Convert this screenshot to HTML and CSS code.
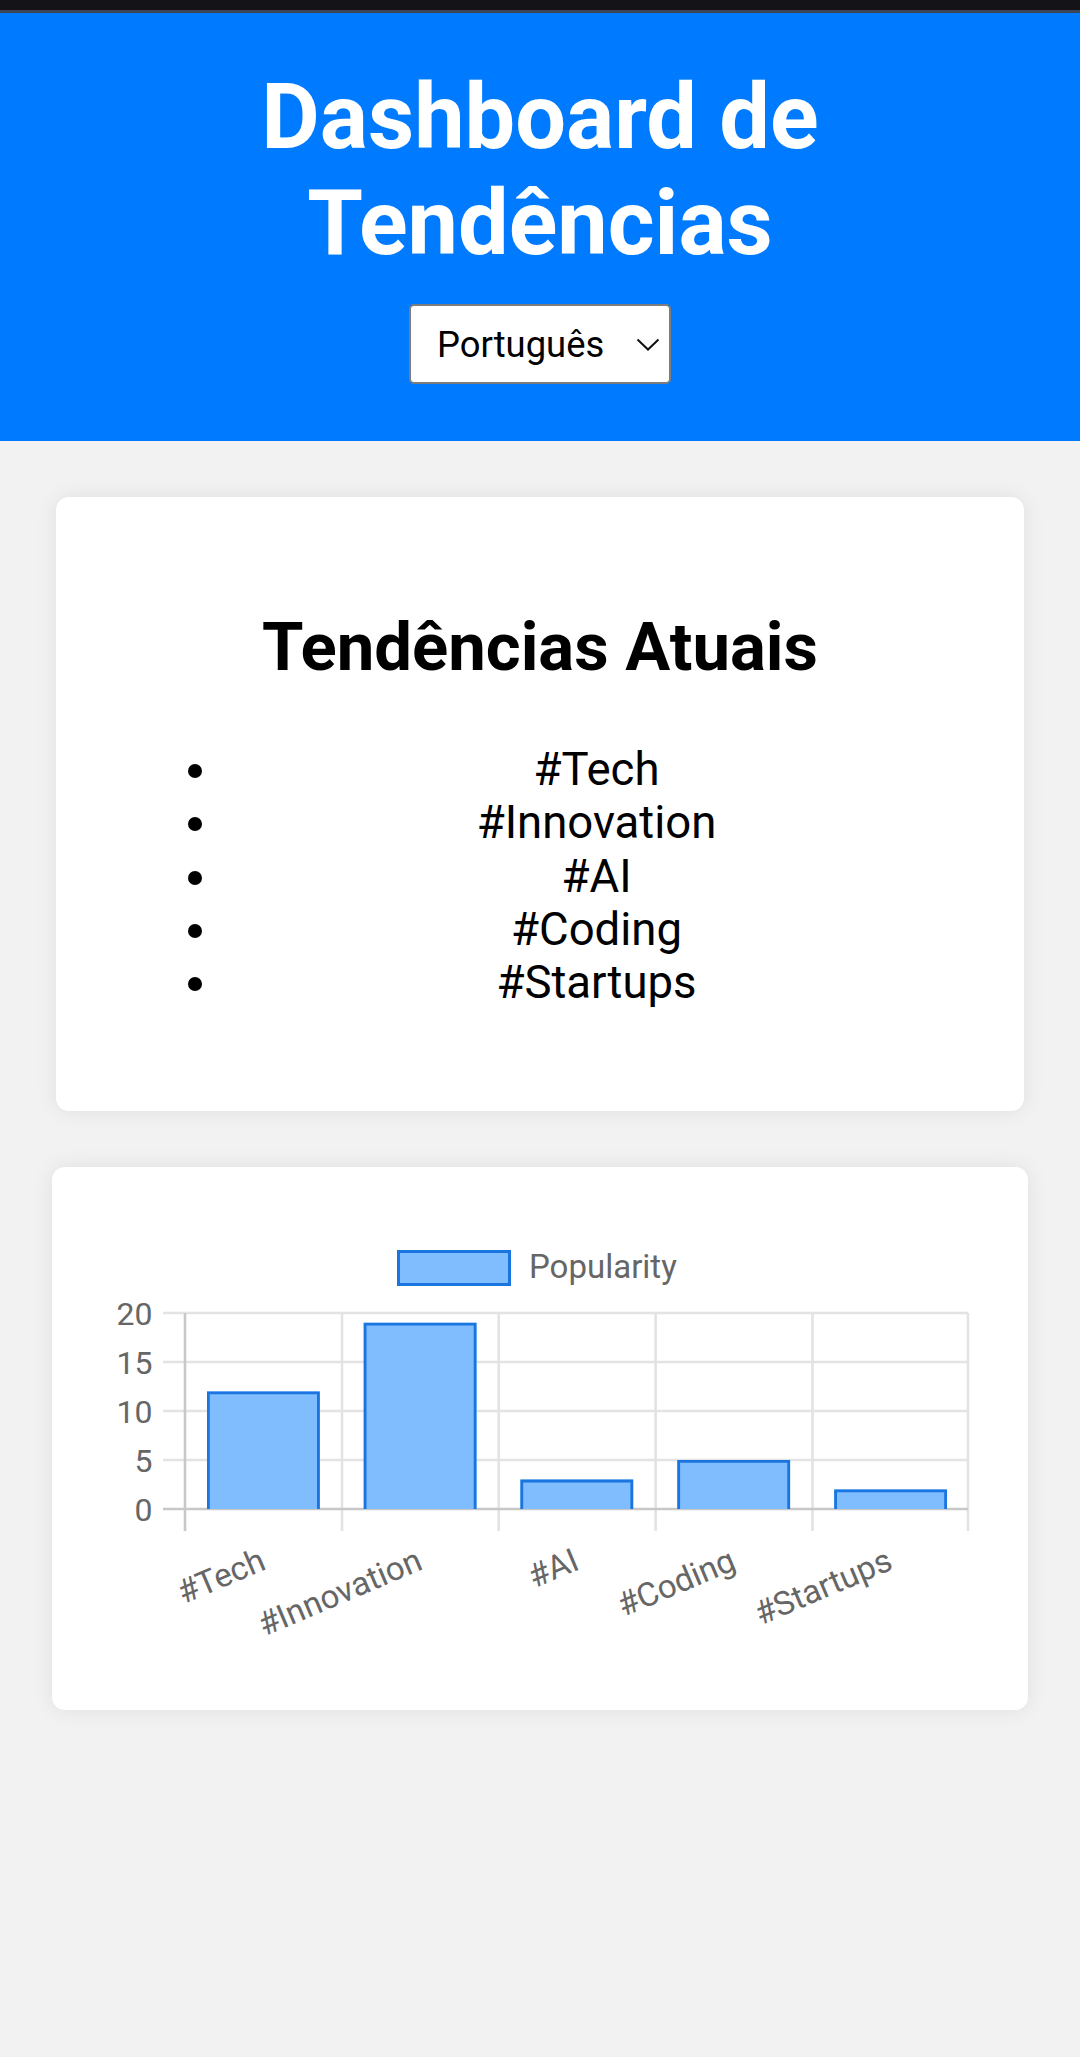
FILE: index.html
```html
<!DOCTYPE html>
<html lang="pt">
<head>
<meta charset="utf-8">
<title>Dashboard de Tendências</title>
<link rel="stylesheet" href="styles.css">
</head>
<body>
<div class="statusbar"></div>
<header class="header">
  <h1 class="title">Dashboard de Tendências</h1>
  <div class="select-wrap">
    <select class="lang">
      <option>Português</option>
      <option>English</option>
    </select>
    <svg class="chev" width="24" height="13" viewBox="0 0 24 13"><path d="M1.5 1.5 L12 11.5 L22.5 1.5" fill="none" stroke="#111" stroke-width="2"/></svg>
  </div>
</header>
<main class="main">
  <section class="card trends">
    <h2 class="card-title">Tendências Atuais</h2>
    <ul class="trend-list">
      <li>#Tech</li>
      <li>#Innovation</li>
      <li>#AI</li>
      <li>#Coding</li>
      <li>#Startups</li>
    </ul>
  </section>
  <section class="card chart-card">
    <svg class="chart" width="872" height="439" viewBox="0 0 872 439">
      <rect x="294.5" y="32.5" width="111" height="33" fill="#80bdff" stroke="#1a75e0" stroke-width="3"/>
      <text class="lbl big" x="425" y="58.5">Popularity</text>
      <g stroke="#e3e3e3" stroke-width="2.6">
        <line x1="59" y1="94" x2="864" y2="94"/>
        <line x1="59" y1="143" x2="864" y2="143"/>
        <line x1="59" y1="192" x2="864" y2="192"/>
        <line x1="59" y1="241" x2="864" y2="241"/>
        <line x1="238" y1="94" x2="238" y2="312"/>
        <line x1="394.7" y1="94" x2="394.7" y2="312"/>
        <line x1="551.6" y1="94" x2="551.6" y2="312"/>
        <line x1="708.5" y1="94" x2="708.5" y2="312"/>
        <line x1="864" y1="94" x2="864" y2="312"/>
      </g>
      <g stroke="#c8c8c8" stroke-width="2.6">
        <line x1="59" y1="290" x2="864" y2="290"/>
        <line x1="81" y1="94" x2="81" y2="312"/>
      </g>
      <g class="lbl" text-anchor="end">
        <text x="48.5" y="105.5">20</text>
        <text x="48.5" y="154.5">15</text>
        <text x="48.5" y="203.5">10</text>
        <text x="48.5" y="252.5">5</text>
        <text x="48.5" y="301.5">0</text>
      </g>
      <g fill="#80bdff">
        <rect x="103" y="172.4" width="112.8" height="117.6"/>
        <rect x="259.7" y="103.8" width="112.8" height="186.2"/>
        <rect x="416.4" y="260.6" width="112.8" height="29.4"/>
        <rect x="573.3" y="241" width="112.8" height="49"/>
        <rect x="730.2" y="270.4" width="112.8" height="19.6"/>
      </g>
      <g fill="none" stroke="#1a75e0" stroke-width="2.8">
        <path d="M104.4 290 V173.8 H214.4 V290"/>
        <path d="M261.1 290 V105.2 H371.1 V290"/>
        <path d="M417.8 290 V262 H527.8 V290"/>
        <path d="M574.7 290 V242.4 H684.7 V290"/>
        <path d="M731.6 290 V271.8 H841.6 V290"/>
      </g>
      <g class="lbl big" text-anchor="end">
        <text transform="translate(159 339) rotate(-23)" dy="0.35em">#Tech</text>
        <text transform="translate(315.7 339) rotate(-23)" dy="0.35em">#Innovation</text>
        <text transform="translate(472.4 339) rotate(-23)" dy="0.35em">#AI</text>
        <text transform="translate(629.1 339) rotate(-23)" dy="0.35em">#Coding</text>
        <text transform="translate(785.8 339) rotate(-23)" dy="0.35em">#Startups</text>
      </g>
    </svg>
  </section>
</main>
</body>
</html>
```
FILE: styles.css
```css
html, body {
  margin: 0;
  padding: 0;
}
body {
  background: #f2f2f2;
  font-family: Roboto, "Noto Sans", Arial, sans-serif;
  font-size: 45.5px;
  color: #000;
  min-height: 2057px;
}
.statusbar {
  height: 13px;
  background: linear-gradient(#141418 0, #141418 10px, #3b4553 10px, #3b4553 13px);
}
.header {
  background: #007bff;
  color: #fff;
  text-align: center;
  padding: 52px 0 57px;
}
.title {
  margin: 0 0 27px;
  font-size: 90px;
  font-weight: 700;
  line-height: 106px;
  padding: 0 150px;
}
.select-wrap {
  position: relative;
  display: inline-block;
  vertical-align: top;
}
.lang {
  -webkit-appearance: none;
  appearance: none;
  width: 262px;
  height: 80px;
  box-sizing: border-box;
  padding: 0 0 0 26px;
  font-family: Roboto, "Noto Sans", Arial, sans-serif;
  font-size: 36.4px;
  color: #000;
  background: #fff;
  border: 2px solid #7d7d7d;
  border-radius: 5px;
  display: block;
}
.chev {
  position: absolute;
  right: 11px;
  top: 34px;
  pointer-events: none;
}
.main {
  padding: 56px 0 0;
}
.card {
  background: #fff;
  border-radius: 13px;
  box-shadow: 0 0 22px rgba(0, 0, 0, 0.08);
}
.trends {
  margin: 0 56px;
  padding: 54px 54px 56px;
  text-align: center;
}
.card-title {
  font-size: 67px;
  font-weight: 700;
  line-height: 80px;
  margin: 56px 0;
}
.trend-list {
  margin: 0 0 45.5px;
  padding-left: 113px;
  line-height: 53.3px;
}
.trend-list li {
  text-align: center;
}
.chart-card {
  margin: 56px 52px 0;
  padding: 52px;
  height: 439px;
}
.chart {
  display: block;
}
.lbl {
  font-family: Roboto, "Noto Sans", Arial, sans-serif;
  font-size: 32px;
  fill: #666;
}
.lbl.big {
  font-size: 33px;
}
```
